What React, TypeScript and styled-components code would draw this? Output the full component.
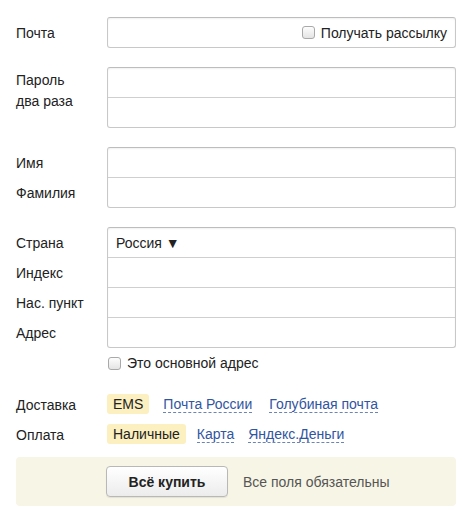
import React from 'react';
import styled, { createGlobalStyle } from 'styled-components';

const GlobalStyle = createGlobalStyle`
  body {
    margin: 0;
    background: #fff;
    font-family: 'Liberation Sans', Arial, sans-serif;
    font-size: 14px;
    color: #222;
  }
`;

const Page = styled.form`
  padding: 17px 16px 0 16px;
  width: 440px;
`;

const Row = styled.div<{ gap?: number }>`
  display: grid;
  grid-template-columns: 91px 349px;
  margin-bottom: ${({ gap }) => (gap ?? 19)}px;
`;

const Labels = styled.div`
  display: flex;
  flex-direction: column;
`;

const Label = styled.div<{ multi?: boolean }>`
  height: 30px;
  line-height: 32px;
  white-space: nowrap;

  ${({ multi }) =>
    multi &&
    `
    height: auto;
    line-height: 21px;
    padding-top: 3px;
  `}
`;

const FieldStack = styled.div`
  border: 1px solid #c8c8c8;
  border-top-color: #bdbdbd;
  border-radius: 3px;
  box-shadow: inset 0 1px 2px rgba(0, 0, 0, 0.06);
  background: #fff;
  overflow: hidden;
`;

const Field = styled.div`
  height: 29px;
  display: flex;
  align-items: center;
  padding: 0 8px;

  & + & {
    border-top: 1px solid #cfcfcf;
  }
`;

const Select = styled.span`
  color: #222;
`;

const CheckLabel = styled.label`
  display: inline-flex;
  align-items: center;
  gap: 6px;
  cursor: pointer;
`;

const Box = styled.span`
  display: inline-block;
  width: 11px;
  height: 11px;
  border: 1px solid #a9a9a9;
  border-radius: 3px;
  background: linear-gradient(#fdfdfd, #e4e4e4);
`;

const MailCheck = styled(CheckLabel)`
  margin-left: auto;
`;

const AddressCheck = styled.div`
  grid-column: 2;
  height: 30px;
  display: flex;
  align-items: center;
  padding-left: 1px;
`;

const Options = styled.div<{ spacing: number }>`
  display: flex;
  align-items: center;
  gap: ${({ spacing }) => spacing}px;
  height: 30px;
`;

const Chosen = styled.span`
  background: #fcefc0;
  border-radius: 3px;
  padding: 0 6px;
  height: 20px;
  line-height: 20px;
  margin-right: 3px;
`;

const Choice = styled.a`
  color: #31559f;
  text-decoration: none;
  border-bottom: 1px dashed #6a84ba;
  line-height: 16px;
  margin: 0 6px;
  cursor: pointer;
`;

const Footer = styled.div`
  display: flex;
  align-items: center;
  gap: 15px;
  background: #f7f5e6;
  border-radius: 4px;
  height: 49px;
  padding-left: 90px;
  margin-top: 8px;
`;

const BuyButton = styled.button`
  width: 122px;
  height: 31px;
  border: 1px solid #b8b8b8;
  border-radius: 4px;
  background: linear-gradient(#ffffff, #ececec);
  font-family: 'Liberation Sans', Arial, sans-serif;
  font-size: 14px;
  font-weight: bold;
  color: #222;
  box-shadow: 0 1px 1px rgba(0, 0, 0, 0.08);
`;

const Note = styled.span`
  color: #555;
`;

const Checkbox: React.FC<{ children: React.ReactNode }> = ({ children }) => (
  <CheckLabel>
    <Box />
    {children}
  </CheckLabel>
);

export default function App() {
  return (
    <>
      <GlobalStyle />
      <Page>
        <Row>
          <Labels>
            <Label>Почта</Label>
          </Labels>
          <FieldStack>
            <Field>
              <MailCheck>
                <Box />
                Получать рассылку
              </MailCheck>
            </Field>
          </FieldStack>
        </Row>

        <Row>
          <Labels>
            <Label multi>
              Пароль
              <br />
              два раза
            </Label>
          </Labels>
          <FieldStack>
            <Field />
            <Field />
          </FieldStack>
        </Row>

        <Row>
          <Labels>
            <Label>Имя</Label>
            <Label>Фамилия</Label>
          </Labels>
          <FieldStack>
            <Field />
            <Field />
          </FieldStack>
        </Row>

        <Row gap={0}>
          <Labels>
            <Label>Страна</Label>
            <Label>Индекс</Label>
            <Label>Нас. пункт</Label>
            <Label>Адрес</Label>
          </Labels>
          <FieldStack>
            <Field>
              <Select>Россия ▼</Select>
            </Field>
            <Field />
            <Field />
            <Field />
          </FieldStack>
        </Row>

        <Row gap={11}>
          <AddressCheck>
            <Checkbox>Это основной адрес</Checkbox>
          </AddressCheck>
        </Row>

        <Row gap={0}>
          <Labels>
            <Label>Доставка</Label>
          </Labels>
          <Options spacing={5}>
            <Chosen>EMS</Chosen>
            <Choice>Почта России</Choice>
            <Choice>Голубиная почта</Choice>
          </Options>
        </Row>

        <Row gap={0}>
          <Labels>
            <Label>Оплата</Label>
          </Labels>
          <Options spacing={2}>
            <Chosen>Наличные</Chosen>
            <Choice>Карта</Choice>
            <Choice>Яндекс.Деньги</Choice>
          </Options>
        </Row>

        <Footer>
          <BuyButton type="button">Всё купить</BuyButton>
          <Note>Все поля обязательны</Note>
        </Footer>
      </Page>
    </>
  );
}
